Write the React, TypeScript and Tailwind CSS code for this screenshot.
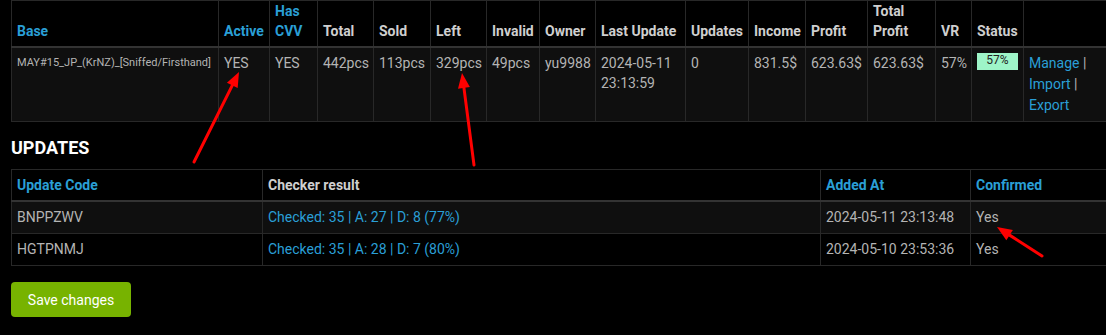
import React from 'react';

const blue = 'text-[#2a9fd6]';

const topCols = [207, 51, 48, 56, 57, 56, 53, 56, 90, 63, 57, 62, 68, 36, 52, 100];

const topHeaders: { label: React.ReactNode; link?: boolean }[] = [
  { label: 'Base', link: true },
  { label: 'Active', link: true },
  { label: <>Has<br />CVV</>, link: true },
  { label: 'Total' },
  { label: 'Sold' },
  { label: 'Left' },
  { label: 'Invalid' },
  { label: 'Owner' },
  { label: 'Last Update' },
  { label: 'Updates' },
  { label: 'Income' },
  { label: 'Profit' },
  { label: <>Total<br />Profit</> },
  { label: 'VR' },
  { label: 'Status' },
  { label: '' },
];

const updates = [
  { code: 'BNPPZWV', result: 'Checked: 35 | A: 27 | D: 8 (77%)', added: '2024-05-11 23:13:48', confirmed: 'Yes' },
  { code: 'HGTPNMJ', result: 'Checked: 35 | A: 28 | D: 7 (80%)', added: '2024-05-10 23:53:36', confirmed: 'Yes' },
];

// red annotation arrows drawn over the screenshot
const arrows = [
  { x1: 194, y1: 162, x2: 239, y2: 72 },
  { x1: 474, y1: 165, x2: 462, y2: 73 },
  { x1: 1042, y1: 256, x2: 997, y2: 227 },
];

const Arrow = ({ x1, y1, x2, y2 }: { x1: number; y1: number; x2: number; y2: number }) => {
  const a = Math.atan2(y2 - y1, x2 - x1);
  const len = 15;
  const half = 6;
  const bx = x2 - Math.cos(a) * len;
  const by = y2 - Math.sin(a) * len;
  const px = -Math.sin(a) * half;
  const py = Math.cos(a) * half;
  return (
    <g>
      <line x1={x1} y1={y1} x2={bx} y2={by} stroke="#ff0000" strokeWidth={3} strokeLinecap="round" />
      <polygon points={`${x2},${y2} ${bx + px},${by + py} ${bx - px},${by - py}`} fill="#ff0000" />
    </g>
  );
};

export default function App() {
  const cell = 'border border-[#282828] px-[5px] pt-[5px] align-top leading-[20px] whitespace-nowrap';
  const td = `${cell} pb-[5px]`;
  const td2 = `${cell} pb-[6px]`;
  const th = 'border border-[#282828] border-b-2 border-b-[#333] px-[5px] align-bottom text-left font-bold leading-[20px] whitespace-nowrap';

  return (
    <div
      className="relative w-[1106px] h-[335px] overflow-hidden bg-black text-[14px] text-[#b4b4b4]"
      style={{ fontFamily: 'Roboto, "Liberation Sans", sans-serif' }}
    >
      <div className="pl-[11px]">
        <table className="table-fixed border-collapse w-[1112px]">
          <colgroup>
            {topCols.map((w, i) => (
              <col key={i} style={{ width: w }} />
            ))}
          </colgroup>
          <thead>
            <tr>
              {topHeaders.map((h, i) => (
                <th key={i} className={`${th} pt-0 pb-[5px] ${h.link ? blue : 'text-[#cfcfcf]'}`}>
                  {h.label}
                </th>
              ))}
            </tr>
          </thead>
          <tbody>
            <tr className="bg-[#0f0f0f]">
              <td className={`${td} text-[11px] leading-[16px]`}>MAY#15_JP_(KrNZ)_[Sniffed/Firsthand]</td>
              <td className={td}>YES</td>
              <td className={td}>YES</td>
              <td className={td}>442pcs</td>
              <td className={td}>113pcs</td>
              <td className={td}>329pcs</td>
              <td className={td}>49pcs</td>
              <td className={td}>yu9988</td>
              <td className={td}>
                2024-05-11
                <br />
                23:13:59
              </td>
              <td className={td}>0</td>
              <td className={td}>831.5$</td>
              <td className={td}>623.63$</td>
              <td className={td}>623.63$</td>
              <td className={td}>57%</td>
              <td className={td}>
                <div className="w-full h-[17px] bg-[#9ef5c8] text-[#222] text-[12px] leading-[15px] text-center">57%</div>
              </td>
              <td className={`${td} leading-[21px]`}>
                <span className={blue}>Manage</span> |
                <br />
                <span className={blue}>Import</span> |
                <br />
                <span className={blue}>Export</span>
              </td>
            </tr>
          </tbody>
        </table>

        <h4 className="mt-[16px] mb-[11px] text-[18px] leading-[20px] font-bold text-white">UPDATES</h4>

        <table className="table-fixed border-collapse w-[1119px]">
          <colgroup>
            <col style={{ width: 251 }} />
            <col style={{ width: 558 }} />
            <col style={{ width: 150 }} />
            <col style={{ width: 160 }} />
          </colgroup>
          <thead>
            <tr>
              <th className={`${th} pt-[5px] pb-[5px] ${blue}`}>Update Code</th>
              <th className={`${th} pt-[5px] pb-[5px] text-[#cfcfcf]`}>Checker result</th>
              <th className={`${th} pt-[5px] pb-[5px] ${blue}`}>Added At</th>
              <th className={`${th} pt-[5px] pb-[5px] ${blue}`}>Confirmed</th>
            </tr>
          </thead>
          <tbody>
            {updates.map((u, i) => (
              <tr key={u.code} className={i % 2 === 0 ? 'bg-[#0f0f0f]' : ''}>
                <td className={td2}>{u.code}</td>
                <td className={`${td2} ${blue}`}>{u.result}</td>
                <td className={td2}>{u.added}</td>
                <td className={td2}>{u.confirmed}</td>
              </tr>
            ))}
          </tbody>
        </table>

        <button className="mt-[16px] w-[120px] h-[35px] rounded-[4px] bg-[#77b300] text-white text-[14px] leading-[20px]">
          Save changes
        </button>
      </div>

      <svg className="absolute inset-0 pointer-events-none" width={1106} height={335}>
        {arrows.map((a, i) => (
          <Arrow key={i} {...a} />
        ))}
      </svg>
    </div>
  );
}
